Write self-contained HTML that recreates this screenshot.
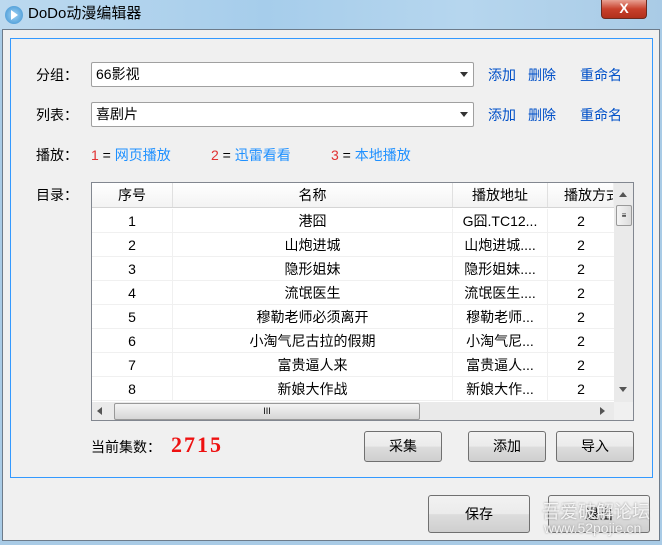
<!DOCTYPE html><html><head><meta charset="utf-8"><style>
*{margin:0;padding:0;box-sizing:border-box}
body{width:662px;height:545px;overflow:hidden;position:relative;font-family:"Liberation Sans","Noto Sans CJK SC",sans-serif;font-size:14px;color:#000;background:#a9cbe6}
.abs{position:absolute}
.title{left:0;top:0;width:662px;height:30px;background:linear-gradient(90deg,#bcd9ef,#a6cdeb 40%,#b6d6ee 70%,#a9cbe6)}
.win{left:2px;top:29px;width:658px;height:512px;background:#f0f0f0;border:1px solid #6d7b8a}
.grp{left:10px;top:38px;width:643px;height:440px;border:1px solid #3399ff}
.lbl{font-size:14px}
.combo{height:25px;border:1px solid #a0a0a0;background:#fff;padding-left:4px;line-height:23px;border-radius:2px}
.arr{position:absolute;right:5px;top:9px;width:0;height:0;border-left:4px solid transparent;border-right:4px solid transparent;border-top:5px solid #333}
.lk{color:#0050c8}
.btn{border:1px solid #707070;border-radius:3px;background:linear-gradient(#f2f2f2,#ebebeb 50%,#dddddd 51%,#cfcfcf);text-align:center;font-size:14px}
.tbl{left:91px;top:182px;width:543px;height:239px;border:1px solid #828790;background:#fff;overflow:hidden}
.row{position:absolute;left:0;height:24px;width:522px;border-bottom:1px solid #f0f0f0;line-height:24px}
.row div{position:absolute;top:0;height:24px;border-right:1px solid #f0f0f0;text-align:center}
</style></head><body>
<div class="abs title"></div>
<div class="abs" style="left:5px;top:6px;width:18px;height:18px;border-radius:50%;background:radial-gradient(#9fd3f5,#3a8fd0);"></div>
<div class="abs" style="left:11px;top:10px;width:0;height:0;border-top:5px solid transparent;border-bottom:5px solid transparent;border-left:7px solid #fff"></div>
<div class="abs" style="left:28px;top:4px;font-size:15px;line-height:20px">DoDo动漫编辑器</div>
<div class="abs" style="left:601px;top:0;width:46px;height:19px;background:linear-gradient(#e8a193,#c8412c 50%,#b1301c);border:1px solid #6b2a1f;border-top:none;border-radius:0 0 4px 4px;color:#fff;text-align:center;font-weight:bold;font-size:14px;line-height:17px">X</div>
<div class="abs win"></div>
<div class="abs grp"></div>

<div class="abs lbl" style="left:36px;top:65px">分组：</div>
<div class="abs combo" style="left:91px;top:62px;width:383px">66影视<span class="arr"></span></div>
<div class="abs lk" style="left:488px;top:65px">添加</div><div class="abs lk" style="left:528px;top:65px">删除</div><div class="abs lk" style="left:580px;top:65px">重命名</div>

<div class="abs lbl" style="left:36px;top:105px">列表：</div>
<div class="abs combo" style="left:91px;top:102px;width:383px">喜剧片<span class="arr"></span></div>
<div class="abs lk" style="left:488px;top:105px">添加</div><div class="abs lk" style="left:528px;top:105px">删除</div><div class="abs lk" style="left:580px;top:105px">重命名</div>

<div class="abs lbl" style="left:36px;top:145px">播放：</div>
<div class="abs" style="left:91px;top:145px"><span style="color:#e03030">1</span> = <span style="color:#1e90ff">网页播放</span></div>
<div class="abs" style="left:211px;top:145px"><span style="color:#e03030">2</span> = <span style="color:#1e90ff">迅雷看看</span></div>
<div class="abs" style="left:331px;top:145px"><span style="color:#e03030">3</span> = <span style="color:#1e90ff">本地播放</span></div>

<div class="abs lbl" style="left:36px;top:185px">目录：</div>
<div class="abs tbl">
 <div class="row" style="top:0;height:25px;background:linear-gradient(#fff,#f3f3f3);border-bottom:1px solid #d5d5d5;line-height:25px">
  <div style="left:0;width:81px;border-right:1px solid #e0e0e0">序号</div><div style="left:81px;width:280px;border-right:1px solid #e0e0e0">名称</div><div style="left:361px;width:95px;border-right:1px solid #e0e0e0">播放地址</div><div style="left:456px;width:66px;white-space:nowrap;overflow:hidden;text-align:left;padding-left:16px">播放方式</div>
 </div>
 <div class="row" style="top:26px"><div style="left:0;width:81px">1</div><div style="left:81px;width:280px">港囧</div><div style="left:361px;width:95px">G囧.TC12...</div><div style="left:456px;width:66px;border:none">2</div></div>
 <div class="row" style="top:50px"><div style="left:0;width:81px">2</div><div style="left:81px;width:280px">山炮进城</div><div style="left:361px;width:95px">山炮进城....</div><div style="left:456px;width:66px;border:none">2</div></div>
 <div class="row" style="top:74px"><div style="left:0;width:81px">3</div><div style="left:81px;width:280px">隐形姐妹</div><div style="left:361px;width:95px">隐形姐妹....</div><div style="left:456px;width:66px;border:none">2</div></div>
 <div class="row" style="top:98px"><div style="left:0;width:81px">4</div><div style="left:81px;width:280px">流氓医生</div><div style="left:361px;width:95px">流氓医生....</div><div style="left:456px;width:66px;border:none">2</div></div>
 <div class="row" style="top:122px"><div style="left:0;width:81px">5</div><div style="left:81px;width:280px">穆勒老师必须离开</div><div style="left:361px;width:95px">穆勒老师...</div><div style="left:456px;width:66px;border:none">2</div></div>
 <div class="row" style="top:146px"><div style="left:0;width:81px">6</div><div style="left:81px;width:280px">小淘气尼古拉的假期</div><div style="left:361px;width:95px">小淘气尼...</div><div style="left:456px;width:66px;border:none">2</div></div>
 <div class="row" style="top:170px"><div style="left:0;width:81px">7</div><div style="left:81px;width:280px">富贵逼人来</div><div style="left:361px;width:95px">富贵逼人...</div><div style="left:456px;width:66px;border:none">2</div></div>
 <div class="row" style="top:194px"><div style="left:0;width:81px">8</div><div style="left:81px;width:280px">新娘大作战</div><div style="left:361px;width:95px">新娘大作...</div><div style="left:456px;width:66px;border:none">2</div></div>
 <div class="abs" style="left:522px;top:0;width:19px;height:219px;background:#eaeaea"></div>
 <div class="abs" style="left:527px;top:9px;border-left:4px solid transparent;border-right:4px solid transparent;border-bottom:5px solid #555"></div>
 <div class="abs" style="left:524px;top:22px;width:16px;height:21px;border:1px solid #999;border-radius:2px;background:linear-gradient(90deg,#f4f4f4,#dcdcdc);font-size:8px;text-align:center;line-height:19px">≡</div>
 <div class="abs" style="left:527px;top:204px;border-left:4px solid transparent;border-right:4px solid transparent;border-top:5px solid #555"></div>
 <div class="abs" style="left:0;top:219px;width:541px;height:18px;background:#eaeaea"></div>
 <div class="abs" style="left:5px;top:224px;border-top:4px solid transparent;border-bottom:4px solid transparent;border-right:5px solid #555"></div>
 <div class="abs" style="left:22px;top:220px;width:306px;height:17px;border:1px solid #999;border-radius:2px;background:linear-gradient(#f4f4f4,#d6d6d6);font-size:9px;text-align:center;line-height:15px">III</div>
 <div class="abs" style="left:508px;top:224px;border-top:4px solid transparent;border-bottom:4px solid transparent;border-left:5px solid #555"></div>
 <div class="abs" style="left:522px;top:219px;width:19px;height:18px;background:#f0f0f0"></div>
</div>

<div class="abs" style="left:91px;top:437px">当前集数：</div>
<div class="abs" style="left:171px;top:432px;color:#ee1111;font-family:'Liberation Serif',serif;font-weight:bold;font-size:22px;letter-spacing:2px">2715</div>
<div class="abs btn" style="left:364px;top:431px;width:78px;height:31px;line-height:29px">采集</div>
<div class="abs btn" style="left:468px;top:431px;width:78px;height:31px;line-height:29px">添加</div>
<div class="abs btn" style="left:556px;top:431px;width:78px;height:31px;line-height:29px">导入</div>
<div class="abs btn" style="left:428px;top:495px;width:102px;height:38px;line-height:36px">保存</div>
<div class="abs btn" style="left:548px;top:495px;width:102px;height:38px;line-height:36px">退出</div>
<div class="abs" style="left:542px;top:498px;color:rgba(255,255,255,.85);font-size:18px;text-shadow:0 0 2px #888">吾爱破解论坛</div>
<div class="abs" style="left:544px;top:520px;color:rgba(255,255,255,.85);font-size:14px;text-shadow:0 0 2px #888">www.52pojie.cn</div>
</body></html>
